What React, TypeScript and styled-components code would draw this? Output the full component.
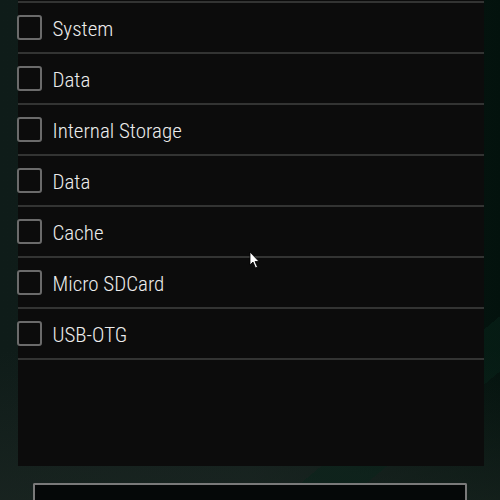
import React from 'react';
import styled, { createGlobalStyle } from 'styled-components';

const GlobalStyle = createGlobalStyle`
  html, body {
    margin: 0;
    padding: 0;
    width: 500px;
    height: 500px;
    overflow: hidden;
    background: #0c1714;
  }
`;

const Screen = styled.div`
  position: relative;
  width: 500px;
  height: 500px;
  display: flex;
  flex-direction: column;
  align-items: center;
  background:
    linear-gradient(140deg, transparent 0 80%, rgba(8, 36, 26, 0.5) 80% 86%, transparent 86%),
    linear-gradient(180deg, rgba(0, 0, 0, 0) 0%, rgba(0, 0, 0, 0) 70%, rgba(30, 40, 36, 0.6) 100%),
    linear-gradient(90deg, #0f1c19 0%, #111e1b 50%, #03120d 100%);
  overflow: hidden;
  font-family: Roboto, 'Liberation Sans', sans-serif;
`;

const Panel = styled.div`
  width: 466px;
  height: 466px;
  margin-left: 1px;
  background: #0c0c0c;
  display: flex;
  flex-direction: column;
  flex-shrink: 0;
`;

const List = styled.div`
  display: flex;
  flex-direction: column;
  margin-top: 1px;
`;

const Row = styled.label`
  display: flex;
  align-items: center;
  gap: 11px;
  height: 49px;
  border-top: 2px solid #333433;
  &:last-child {
    border-bottom: 2px solid #333433;
  }
`;

const Box = styled.span`
  width: 21px;
  height: 21px;
  margin-left: -1px;
  margin-top: -1px;
  border: 2px solid #6b6b6b;
  border-radius: 3px;
  box-sizing: content-box;
`;

const Label = styled.span`
  color: #ededed;
  font-size: 21px;
  font-weight: 300;
  font-stretch: condensed;
  margin-top: 2px;
`;

const Button = styled.div`
  margin-top: 17px;
  width: 430px;
  height: 40px;
  flex-shrink: 0;
  border: 2px solid #7a7a7a;
  border-bottom: none;
  border-radius: 2px 2px 0 0;
  background: #050808;
`;

// mouse pointer sitting over the list
const Pointer = styled.svg`
  position: absolute;
  left: 249px;
  top: 251px;
  width: 12px;
  height: 19px;
`;

const items = ['System', 'Data', 'Internal Storage', 'Data', 'Cache', 'Micro SDCard', 'USB-OTG'];

const App: React.FC = () => {
  return (
    <Screen>
      <GlobalStyle />
      <Panel>
        <List>
          {items.map((name, i) => (
            <Row key={i}>
              <Box />
              <Label>{name}</Label>
            </Row>
          ))}
        </List>
      </Panel>
      <Button />
      <Pointer viewBox="0 0 12 19">
        <path
          d="M1 1 L1 14 L4 11 L6.5 17 L8.5 16 L6 10.5 L10 10.5 Z"
          fill="#fff"
          stroke="#000"
          strokeWidth="0.8"
          strokeLinejoin="round"
        />
      </Pointer>
    </Screen>
  );
};

export default App;
